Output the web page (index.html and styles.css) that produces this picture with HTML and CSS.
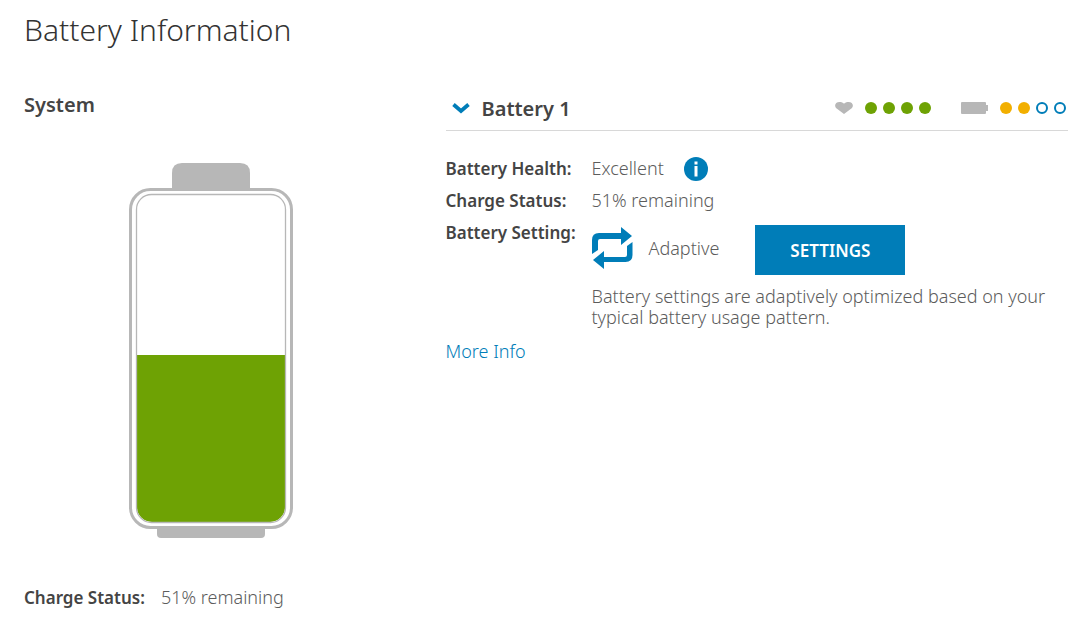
FILE: index.html
```html
<!DOCTYPE html>
<html lang="en">
<head>
    <meta charset="UTF-8">
    <meta name="viewport" content="width=device-width, initial-scale=1.0">
    <title>Battery Information</title>
    <link rel="stylesheet" href="styles.css">
</head>
<body>
    <main class="page">
        <h1>Battery Information</h1>

        <div class="columns">
            <section class="system">
                <h2>System</h2>
                <svg class="battery-graphic" width="164" height="376" viewBox="0 0 164 376" role="img" aria-label="Battery 51% full">
                    <defs>
                        <clipPath id="cell">
                            <rect x="8" y="32" width="148" height="327" rx="15"/>
                        </clipPath>
                    </defs>
                    <path d="M43 27V10Q43 0 53 0H111Q121 0 121 10V27Z" fill="#b7b7b7"/>
                    <path d="M28 364V371Q28 375 32 375H132Q136 375 136 371V364Z" fill="#b7b7b7"/>
                    <rect x="1.5" y="26.5" width="161" height="338" rx="20" fill="#fff" stroke="#b7b7b7" stroke-width="3"/>
                    <rect x="8" y="192" width="148" height="167" fill="#6ea204" clip-path="url(#cell)"/>
                    <rect x="7.5" y="31.5" width="149" height="328" rx="15" fill="none" stroke="#b7b7b7" stroke-width="1.3"/>
                </svg>
                <dl class="system-status">
                    <dt>Charge Status:</dt>
                    <dd>51% remaining</dd>
                </dl>
            </section>

            <section class="battery">
                <div class="battery-header">
                    <button type="button" class="toggle" aria-expanded="true" aria-controls="battery1">
                        <svg width="18" height="12" viewBox="0 0 18 12" aria-hidden="true">
                            <path d="M1.5 2.5L9 9L16.5 2.5" fill="none" stroke="#007db8" stroke-width="3.8"/>
                        </svg>
                        <span>Battery 1</span>
                    </button>
                    <div class="meters">
                        <div class="meter" role="img" aria-label="Health 4 of 4">
                            <svg width="18" height="12" viewBox="0 0 18 12">
                                <path d="M9 12L1 6C-1 3.5 .5 0 4.5 0C6.5 0 8 .6 9 1.8C10 .6 11.5 0 13.5 0C17.5 0 19 3.5 17 6Z" fill="#b7b7b7"/>
                            </svg>
                            <div class="dots">
                                <span class="dot green"></span>
                                <span class="dot green"></span>
                                <span class="dot green"></span>
                                <span class="dot green"></span>
                            </div>
                        </div>
                        <div class="meter" role="img" aria-label="Charge 2 of 4">
                            <svg width="27" height="12" viewBox="0 0 27 12">
                                <path d="M1 0H24Q25 0 25 1V3H27V9H25V11Q25 12 24 12H1Q0 12 0 11V1Q0 0 1 0Z" fill="#b7b7b7"/>
                            </svg>
                            <div class="dots">
                                <span class="dot amber"></span>
                                <span class="dot amber"></span>
                                <span class="dot"></span>
                                <span class="dot"></span>
                            </div>
                        </div>
                    </div>
                </div>

                <dl class="details" id="battery1">
                    <dt>Battery Health:</dt>
                    <dd class="health">
                        Excellent
                        <button type="button" class="info" aria-label="About battery health">
                            <svg width="24" height="24" viewBox="0 0 24 24" aria-hidden="true">
                                <circle cx="12" cy="12" r="12" fill="#007db8"/>
                                <path d="M10.5 4.5H13.5V7.5H10.5ZM10.5 9H13.5V19.5H10.5Z" fill="#fff"/>
                            </svg>
                        </button>
                    </dd>
                    <dt>Charge Status:</dt>
                    <dd>51% remaining</dd>
                    <dt>Battery Setting:</dt>
                    <dd>
                        <div class="setting">
                            <svg width="41" height="42" viewBox="0 0 41 42" aria-hidden="true">
                                <path d="M0 27V13Q0 6 7 6H29V0L40 9L29 18V12H8Q6 12 6 14V23Z" fill="#007db8"/>
                                <path d="M40.5 15V28Q40.5 35 33.5 35H12V42L1 33L12 24V30H33Q35 30 35 28V19Z" fill="#007db8"/>
                            </svg>
                            <span class="mode">Adaptive</span>
                            <button type="button" class="settings-btn">SETTINGS</button>
                        </div>
                        <p>Battery settings are adaptively optimized based on your typical battery usage pattern.</p>
                    </dd>
                </dl>
                <a class="more" href="#">More Info</a>
            </section>
        </div>
    </main>
</body>
</html>
```

FILE: styles.css
```css
* {
    margin: 0;
    padding: 0;
    box-sizing: border-box;
}

body {
    background-color: #fff;
    color: #5c5c5c;
    font-family: "Noto Sans", sans-serif;
    font-size: 18px;
    font-weight: 300;
    line-height: 21px;
}

svg {
    display: block;
    flex-shrink: 0;
}

button {
    border: none;
    background: none;
    font-family: inherit;
    cursor: pointer;
}

.page {
    padding: 12px 6px 24px 24px;
}

h1 {
    color: #333;
    font-size: 30px;
    font-weight: 300;
    line-height: 36px;
}

.columns {
    display: grid;
    grid-template-columns: 3fr 5fr;
    gap: 48px;
    margin-top: 40px;
}

.system {
    display: flex;
    flex-direction: column;
}

h2 {
    color: #444;
    font-size: 20px;
    font-weight: 600;
    line-height: 34px;
}

.battery-graphic {
    align-self: center;
    margin-top: 41px;
}

dt {
    color: #444;
    font-size: 17px;
    font-weight: 600;
}

.system-status {
    display: flex;
    gap: 16px;
    margin-top: 48px;
}

.battery-header {
    display: flex;
    align-items: center;
    justify-content: space-between;
    height: 43px;
    padding-bottom: 2px;
    border-bottom: 1px solid #d8d8d8;
}

.toggle {
    display: flex;
    align-items: center;
    gap: 12px;
    padding-left: 6px;
    color: #444;
    font-size: 20px;
    font-weight: 600;
}

.meters {
    display: flex;
    gap: 30px;
    padding-right: 2px;
}

.meter {
    display: flex;
    align-items: center;
    gap: 12px;
}

.dots {
    display: flex;
    gap: 6px;
}

.dot {
    width: 12px;
    height: 12px;
    border: 2px solid #007db8;
    border-radius: 50%;
}

.green {
    border: none;
    background-color: #6ea204;
}

.amber {
    border: none;
    background-color: #f2af00;
}

.details {
    display: grid;
    grid-template-columns: 146px 1fr;
    row-gap: 11px;
    margin-top: 27px;
}

.health {
    display: flex;
    align-items: center;
    gap: 20px;
    height: 21px;
}

.setting {
    display: flex;
    align-items: center;
    height: 52px;
    margin-bottom: 12px;
}

.mode {
    margin-left: 16px;
}

.settings-btn {
    width: 150px;
    height: 50px;
    margin-top: 4px;
    margin-left: 36px;
    background-color: #007db8;
    color: #fff;
    font-size: 17px;
    font-weight: 600;
}

.settings-btn:hover {
    background-color: #00639c;
}

.more {
    display: inline-block;
    margin-top: 13px;
    color: #007db8;
    text-decoration: none;
}

.more:hover {
    text-decoration: underline;
}
```
